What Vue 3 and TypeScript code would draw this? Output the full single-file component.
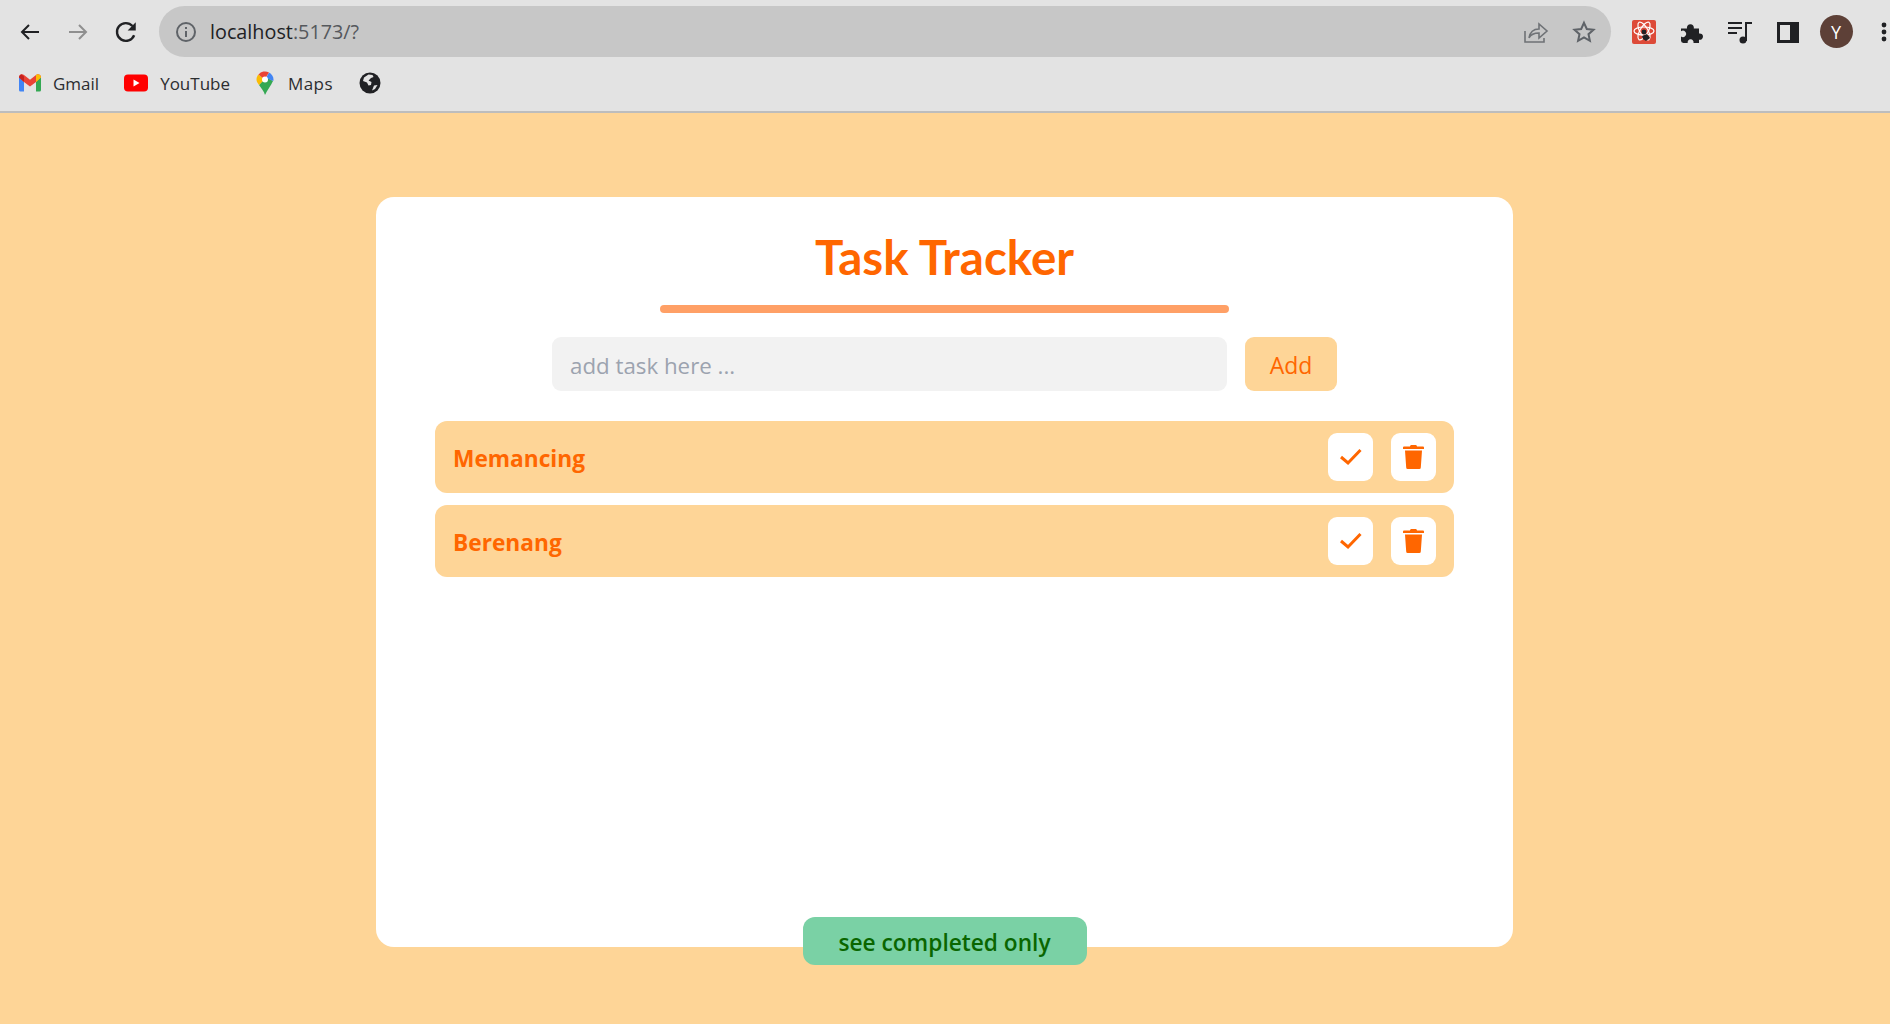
<script setup lang="ts">
import { ref, computed } from 'vue'

interface Task {
  id: number
  title: string
  done: boolean
}

const draft = ref('')
const completedOnly = ref(false)
const tasks = ref<Task[]>([
  { id: 1, title: 'Memancing', done: false },
  { id: 2, title: 'Berenang', done: false },
])

const visibleTasks = computed(() =>
  completedOnly.value ? tasks.value.filter((t) => t.done) : tasks.value,
)

function addTask() {
  if (!draft.value.trim()) return
  tasks.value.push({ id: Date.now(), title: draft.value.trim(), done: false })
  draft.value = ''
}

function removeTask(id: number) {
  tasks.value = tasks.value.filter((t) => t.id !== id)
}
</script>

<template>
  <div class="page">
    <header class="chrome">
      <div class="toolbar">
        <div class="nav">
          <span class="tool">
            <svg width="24" height="24" viewBox="0 0 24 24" fill="none" stroke="#202124" stroke-width="2"><path d="M21 12H4M11 5l-7 7 7 7" /></svg>
          </span>
          <span class="tool">
            <svg width="24" height="24" viewBox="0 0 24 24" fill="none" stroke="#8f8f8f" stroke-width="2"><path d="M3 12h17M13 5l7 7-7 7" /></svg>
          </span>
          <span class="tool">
            <svg width="26" height="26" viewBox="0 0 24 24" fill="none" stroke="#202124" stroke-width="2.200"><path d="M19.500 15A8.200 8.200 0 1 1 18 6.500" /><path d="M21 3v7.500h-7.500z" fill="#202124" stroke="none" /></svg>
          </span>
        </div>
        <div class="omnibox">
          <svg class="info" width="22" height="22" viewBox="0 0 22 22" fill="none" stroke="#5f6368" stroke-width="2"><circle cx="11" cy="11" r="9" /><path d="M11 10v6M11 6v2" /></svg>
          <span class="url">localhost<span class="url-rest">:5173/?</span></span>
          <span class="omni-actions">
            <svg width="26" height="24" viewBox="0 0 26 24" fill="none" stroke="#6f7276" stroke-width="1.600"><path d="M2 11v11h19v-4" /><path d="M6 18c1-6 5-9 10-9V4l8 7-8 7v-5c-4 0-8 1-10 5z" /></svg>
            <svg width="24" height="24" viewBox="0 0 24 24" fill="none" stroke="#5f6368" stroke-width="2"><path d="M12 2.800l2.800 6.200 6.700.7-5 4.500 1.400 6.600L12 17.400l-5.900 3.400 1.400-6.600-5-4.500 6.700-.7z" /></svg>
          </span>
        </div>
        <div class="extensions">
          <span class="tool">
            <svg width="24" height="24" viewBox="0 0 24 24"><rect width="24" height="24" rx="2" fill="#dd4a38" /><g fill="none" stroke="#fff" stroke-width="1.200"><ellipse cx="12" cy="11" rx="10" ry="4" /><ellipse cx="12" cy="11" rx="10" ry="4" transform="rotate(60 12 11)" /><ellipse cx="12" cy="11" rx="10" ry="4" transform="rotate(120 12 11)" /></g><circle cx="12" cy="12" r="2.400" fill="#202124" /><path d="M10 16l5-2 3 4-4 3-3-2z" fill="#202124" /></svg>
          </span>
          <span class="tool">
            <svg width="24" height="24" viewBox="0 0 24 24" fill="#202124"><path d="M1 8.500h6a3.500 3.500 0 1 1 6.800 0H19v5a3.200 3.200 0 1 1 0 6.200V23h-5.500a3 3 0 1 0-5.800 0H3.400A2.400 2.400 0 0 1 1 20.600v-4.200a3.200 3.200 0 1 0 0-5.200z" /></svg>
          </span>
          <span class="tool">
            <svg width="24" height="24" viewBox="0 0 24 24" fill="none" stroke="#202124" stroke-width="2"><path d="M0 3h14M0 8h14M0 13h9" /><path d="M18 21V3h6" /><circle cx="15" cy="20" r="3.500" fill="#202124" stroke="none" /></svg>
          </span>
          <span class="tool">
            <svg width="24" height="24" viewBox="0 0 24 24"><path fill="#202124" d="M1 2h22v21H1zM4 5v15h10V5z" /></svg>
          </span>
          <span class="tool"><span class="avatar">Y</span></span>
          <span class="tool tool-last">
            <svg width="6" height="20" viewBox="0 0 6 20" fill="#202124"><circle cx="3" cy="3" r="2.400" /><circle cx="3" cy="10" r="2.400" /><circle cx="3" cy="17" r="2.400" /></svg>
          </span>
        </div>
      </div>
      <div class="bookmarks">
        <span class="bookmark">
          <svg width="22" height="18" viewBox="0 0 22 18"><path fill="#4285f4" d="M0 3v13a1.500 1.500 0 0 0 1.500 1.500H5V8z" /><path fill="#34a853" d="M22 3v13a1.500 1.500 0 0 1-1.500 1.500H17V8z" /><path fill="#ea4335" d="M0 3.500C0 .8 3 -.6 5 1l6 4.700L17 1c2-1.600 5-.2 5 2.500l-5 4.500-6 4.500L5 8z" /><path fill="#fbbc04" d="M17 1c2-1.600 5-.2 5 2.500L17 8z" /><path fill="#c5221f" d="M0 3.500C0 2 1 .6 2.400 .2L5 2.500V8z" /></svg>
          Gmail
        </span>
        <span class="bookmark">
          <svg width="24" height="18" viewBox="0 0 24 18"><rect width="24" height="17" y=".5" rx="4" fill="#f00" /><path d="M9.500 5.500v7l6-3.500z" fill="#fff" /></svg>
          YouTube
        </span>
        <span class="bookmark bookmark-maps">
          <svg width="18" height="24" viewBox="0 0 18 24"><path fill="#34a853" d="M9 24c-1-4-4-7-6-10l7-8 7 4c-2 5-6 9-8 14z" /><path fill="#fbbc04" d="M3 14C1.500 12 .5 10.500 .5 8.500c0-2 .8-3.700 2-5l6 5z" /><path fill="#4285f4" d="M13 1.400c2.600 1.300 4.500 4 4.500 7.100 0 .6-.1 1.100-.2 1.600L10 7z" /><path fill="#ea4335" d="M2.500 3.500A8.500 8.500 0 0 1 13 1.400L8.500 8.500z" /><circle cx="9" cy="8.500" r="3" fill="#fff" /></svg>
          Maps
        </span>
        <span class="bookmark">
          <svg width="22" height="22" viewBox="0 0 22 22"><circle cx="11" cy="11" r="10.500" fill="#202124" /><path fill="#e3e3e3" d="M9.500 2.600L5 5.500 4 9l4 1.500 1.500 3 2.500-.5.500-3-3-1.500L12 6l2.500-1-1-2zM15 13.500l-2 5 3-1.500 2.500-4z" /></svg>
        </span>
      </div>
    </header>

    <main class="content">
      <section class="card">
        <h1 class="title">Task Tracker</h1>
        <div class="divider"></div>

        <form class="add-form" @submit.prevent="addTask">
          <input v-model="draft" class="add-input" type="text" placeholder="add task here ..." />
          <button class="add-btn" type="submit">Add</button>
        </form>

        <ul class="task-list">
          <li v-for="task in visibleTasks" :key="task.id" class="task">
            <span class="task-title">{{ task.title }}</span>
            <div class="task-actions">
              <button class="icon-btn" type="button" @click="task.done = !task.done">
                <svg width="22" height="18" viewBox="0 0 22 18" fill="none" stroke="#ff6600" stroke-width="3"><path d="M1 9l7 6L20.500 2" /></svg>
              </button>
              <button class="icon-btn" type="button" @click="removeTask(task.id)">
                <svg width="21" height="24" viewBox="0 0 21 24" fill="#ff6600"><path d="M7 1.500C7 .7 7.700 0 8.500 0h4c.8 0 1.500.7 1.500 1.500H20a1 1 0 0 1 1 1V4H0V2.500a1 1 0 0 1 1-1z" /><path d="M2 5.500h17l-1.200 17A1.500 1.500 0 0 1 16.300 24H4.700a1.500 1.500 0 0 1-1.500-1.500z" /></svg>
              </button>
            </div>
          </li>
        </ul>

        <button class="filter-btn" type="button" @click="completedOnly = !completedOnly">see completed only</button>
      </section>
    </main>
  </div>
</template>

<style scoped>
.page {
  min-height: 1024px;
  background: #fed597;
  font-family: "Open Sans", "Noto Sans", sans-serif;
  display: flex;
  flex-direction: column;
}

.chrome {
  background: #e3e3e3;
  border-bottom: 2px solid #bdbdbd;
  height: 111px;
  flex-shrink: 0;
  overflow: hidden;
}
.toolbar {
  display: flex;
  align-items: center;
  padding: 6px 0 0 6px;
  height: 51px;
}
.nav {
  display: flex;
  margin-right: 9px;
}
.tool {
  width: 48px;
  height: 48px;
  display: flex;
  align-items: center;
  justify-content: center;
  flex-shrink: 0;
}
.tool-last {
  width: 30px;
  justify-content: flex-end;
  padding-right: 3px;
  box-sizing: border-box;
}
.omnibox {
  flex: 1;
  height: 51px;
  background: #c7c7c7;
  border-radius: 26px;
  display: flex;
  align-items: center;
  padding: 0 15px 0 16px;
  box-sizing: border-box;
}
.info {
  margin-right: 13px;
}
.url {
  font-size: 19.800px;
  color: #202124;
}
.url-rest {
  color: #55585c;
}
.omni-actions {
  margin-left: auto;
  display: flex;
  align-items: center;
  gap: 23px;
}
.extensions {
  display: flex;
  margin-left: 9px;
}
.avatar {
  width: 33px;
  height: 33px;
  border-radius: 50%;
  background: #5d4037;
  color: #fff;
  font-size: 18px;
  display: flex;
  align-items: center;
  justify-content: center;
}
.bookmarks {
  display: flex;
  align-items: center;
  gap: 25px;
  height: 47px;
  padding: 5px 0 0 19px;
  box-sizing: border-box;
}
.bookmark {
  display: flex;
  align-items: center;
  gap: 12px;
  font-size: 17px;
  color: #2b2d30;
}
.bookmark-maps {
  gap: 14px;
  letter-spacing: .4px;
  margin-left: 1px;
  margin-right: 1px;
}

.content {
  flex: 1;
  display: flex;
  justify-content: center;
  padding: 84px 1px 0 0;
}
.card {
  width: 1137px;
  height: 750px;
  background: #fff;
  border-radius: 18px;
  display: flex;
  flex-direction: column;
  align-items: center;
  box-sizing: border-box;
}
.title {
  margin: 24px 0 0;
  font-family: Lato, "Open Sans", sans-serif;
  font-size: 47.500px;
  line-height: 72px;
  font-weight: 700;
  color: #ff6600;
}
.divider {
  width: 569px;
  height: 8px;
  margin-top: 12px;
  border-radius: 4px;
  background: #ffa066;
  margin-bottom: 24px;
}
.add-form {
  display: flex;
  gap: 18px;
}
.add-input {
  width: 675px;
  height: 54px;
  border: none;
  outline: none;
  border-radius: 9px;
  background: #f2f2f2;
  padding: 3px 18px 0;
  box-sizing: border-box;
  font: inherit;
  font-size: 22.300px;
  color: #333;
}
.add-input::placeholder {
  color: #9ca3af;
  opacity: 1;
}
.add-btn {
  width: 92px;
  height: 54px;
  border: none;
  padding: 2px 0 0;
  border-radius: 9px;
  background: #fed597;
  color: #ff6600;
  font: inherit;
  font-size: 23px;
}
.task-list {
  list-style: none;
  margin: 30px 0 0;
  padding: 0;
  width: 1019px;
  display: flex;
  flex-direction: column;
  gap: 12px;
}
.task {
  height: 72px;
  background: #fed597;
  border-radius: 12px;
  display: flex;
  align-items: center;
  justify-content: space-between;
  padding: 0 18px;
}
.task-title {
  padding-top: 2px;
  font-size: 22.700px;
  font-weight: 700;
  color: #ff6600;
}
.task-actions {
  display: flex;
  gap: 18px;
}
.icon-btn {
  width: 45px;
  height: 48px;
  border: none;
  padding: 0;
  border-radius: 9px;
  background: #fff;
  display: flex;
  align-items: center;
  justify-content: center;
}
.filter-btn {
  margin-top: auto;
  margin-bottom: -18px;
  width: 284px;
  height: 48px;
  border: none;
  padding: 2px 0 0;
  border-radius: 12px;
  background: #7ad1a5;
  color: #0a6600;
  font: inherit;
  font-size: 22.700px;
  font-weight: 600;
}
</style>
